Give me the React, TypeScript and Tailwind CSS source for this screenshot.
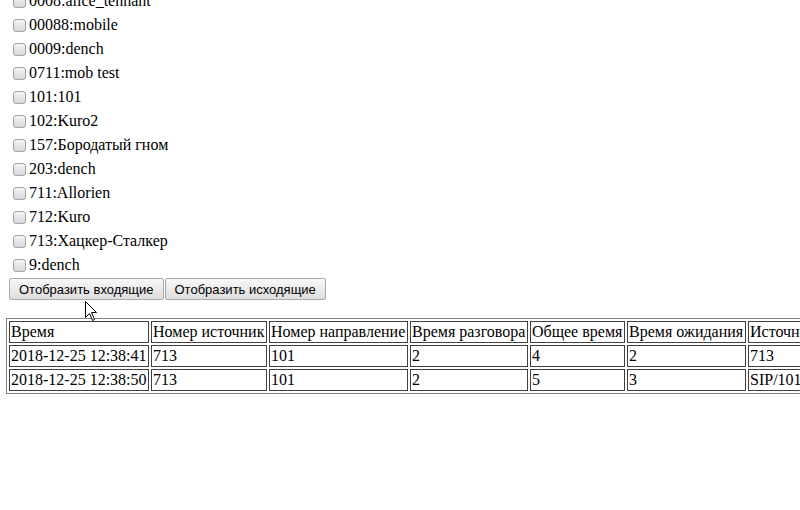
import React from "react";

const items = [
  "0008:alice_tennant",
  "00088:mobile",
  "0009:dench",
  "0711:mob test",
  "101:101",
  "102:Kuro2",
  "157:Бородатый гном",
  "203:dench",
  "711:Allorien",
  "712:Kuro",
  "713:Хацкер-Сталкер",
  "9:dench",
];

const headers = [
  "Время",
  "Номер источник",
  "Номер направление",
  "Время разговора",
  "Общее время",
  "Время ожидания",
  "Источник",
];

const rows = [
  ["2018-12-25 12:38:41", "713", "101", "2", "4", "2", "713"],
  ["2018-12-25 12:38:50", "713", "101", "2", "5", "3", "SIP/101"],
];

const widths = [140, 116, 139, 118, 95, 119, 90];

function Checkbox() {
  return (
    <span className="inline-block w-[13px] h-[13px] rounded-[3px] border border-[#a3a3a3] bg-gradient-to-b from-[#f4f4f4] to-[#d9d9d9] shrink-0" />
  );
}

function Btn({ children }: { children: React.ReactNode }) {
  return (
    <button className="h-[22px] px-[9px] border border-[#a9a9a9] rounded-[2px] bg-gradient-to-b from-[#f8f8f8] to-[#dddddd] text-[13px] text-black leading-none" style={{ fontFamily: "Arial, 'Liberation Sans', sans-serif" }}>
      {children}
    </button>
  );
}

export default function App() {
  return (
    <div
      className="relative w-[800px] h-[510px] overflow-hidden bg-white text-black text-[16px]"
      style={{ fontFamily: "'Liberation Serif', 'Times New Roman', serif" }}
    >
      <div className="-mt-[11px]">
        {items.map((t) => (
          <div key={t} className="flex items-center h-[24px] pl-[13px]">
            <Checkbox />
            <span className="ml-[3px] leading-[18px] whitespace-pre">{t}</span>
          </div>
        ))}
      </div>
      <div className="flex gap-[1px] pl-[9px] mt-[1px]">
        <Btn>Отобразить входящие</Btn>
        <Btn>Отобразить исходящие</Btn>
      </div>
      <div className="pl-[6px] mt-[18px]">
        <table
          className="border border-[#808080] border-separate border-spacing-[2px] table-fixed"
          style={{ width: 835 }}
        >
          <colgroup>
            {widths.map((w, i) => (
              <col key={i} style={{ width: w }} />
            ))}
          </colgroup>
          <tbody>
            <tr>
              {headers.map((h) => (
                <td key={h} className="border border-[#404040] px-[1px] h-[22px] p-0 leading-[18px] whitespace-nowrap overflow-hidden align-middle">
                  {h}
                </td>
              ))}
            </tr>
            {rows.map((r, ri) => (
              <tr key={ri}>
                {r.map((c, ci) => (
                  <td key={ci} className="border border-[#404040] px-[1px] h-[22px] p-0 leading-[18px] whitespace-nowrap overflow-hidden align-middle">
                    {c}
                  </td>
                ))}
              </tr>
            ))}
          </tbody>
        </table>
      </div>
      <svg
        className="absolute left-[85px] top-[301px]"
        width="13"
        height="22"
        viewBox="0 0 13 22"
      >
        <path
          d="M0.5 0.5 L0.5 16.5 L4.5 12.5 L7.5 19.5 L9.5 18.5 L6.5 11.5 L11.5 11.5 Z"
          fill="white"
          stroke="black"
          strokeWidth="1"
          strokeLinejoin="miter"
        />
      </svg>
    </div>
  );
}
